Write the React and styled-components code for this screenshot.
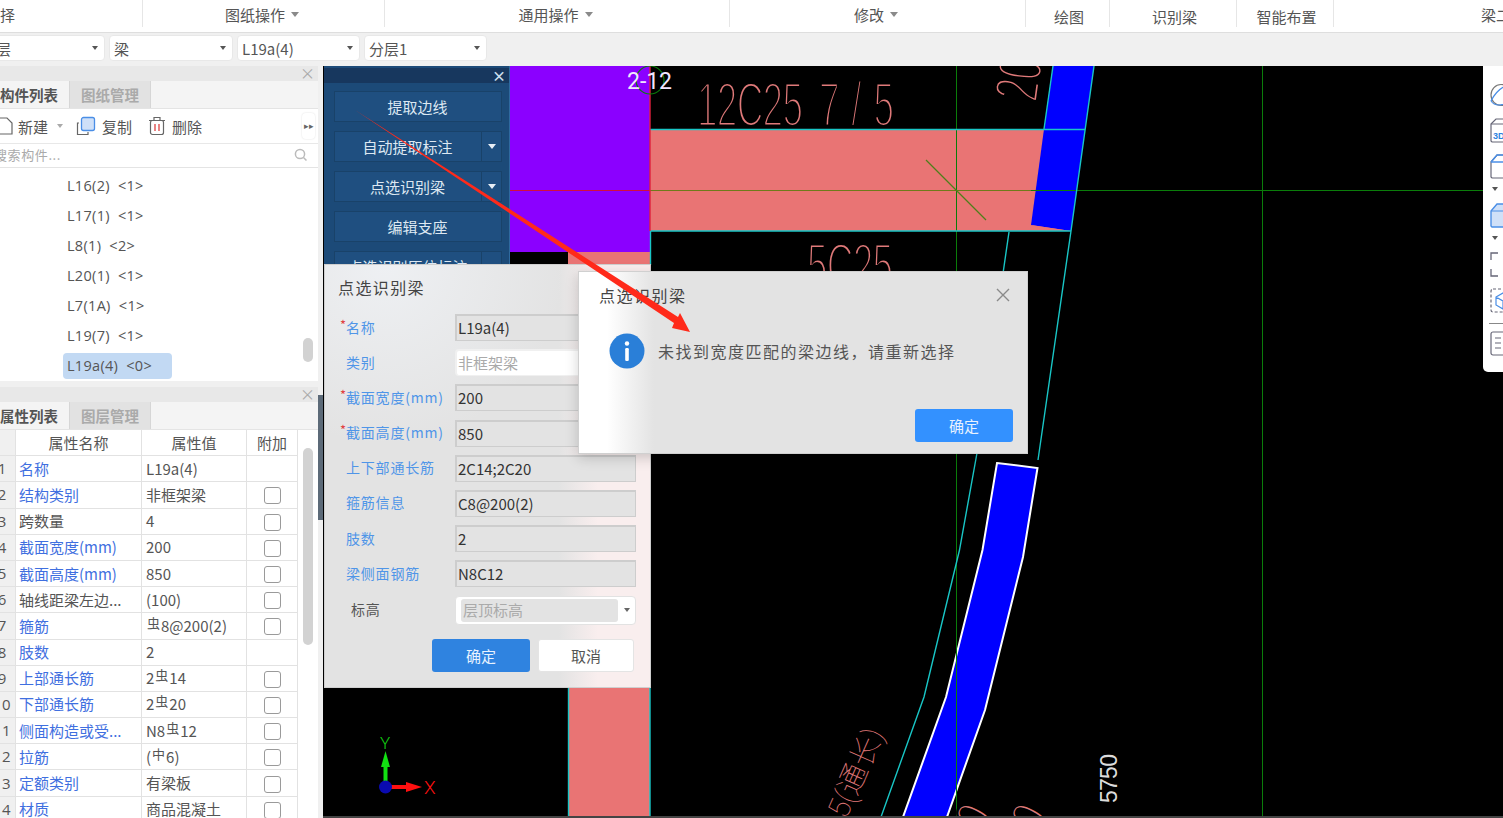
import React from "react";
import styled, { createGlobalStyle } from "styled-components";

const Global = createGlobalStyle`
  html, body { margin: 0; padding: 0; background: #fff; }
  body { font-family: "Noto Sans CJK SC", "Liberation Sans", sans-serif; font-size: 15px; color: #555; }
`;

const Page = styled.div`
  position: relative;
  width: 1503px;
  height: 818px;
  overflow: hidden;
  display: flex;
  flex-direction: column;
`;

/* ribbon */
const Ribbon = styled.div`
  display: flex;
  height: 33px;
  flex: none;
  background: #fff;
  border-bottom: 1px solid #dedede;
  box-sizing: border-box;
`;
const RibbonGroup = styled.div`
  flex: none;
  width: ${p => p.$w}px;
  height: 27px;
  box-sizing: border-box;
  padding-top: ${p => (p.$low ? 6 : 2)}px;
  padding-left: ${p => p.$pad ?? (p.$low ? 3 : 0)}px;
  padding-right: ${p => (p.$low || p.$pad !== undefined ? 0 : 3)}px;
  display: flex;
  align-items: center;
  justify-content: ${p => (p.$pad !== undefined ? "flex-start" : "center")};
  gap: 6px;
  border-right: ${p => (p.$last ? "none" : "1px solid #e6e6e6")};
  color: #555;
  white-space: nowrap;
  overflow: hidden;
`;
const ClippedLabel = styled.span`
  margin-left: -15px;
`;
const Caret = styled.i`
  display: inline-block;
  width: 0;
  height: 0;
  border-left: 4.5px solid transparent;
  border-right: 4.5px solid transparent;
  border-top: 5px solid ${p => p.$c || "#8a8a8a"};
`;

/* selector bar */
const SelectBar = styled.div`
  display: flex;
  flex: none;
  height: 33px;
  align-items: center;
  gap: 4px;
  background: #f0f0f0;
  padding-bottom: 3px;
  box-sizing: border-box;
`;
const Select = styled.div`
  flex: none;
  width: ${p => p.$w}px;
  margin-left: ${p => p.$ml || 0}px;
  height: 26px;
  box-sizing: border-box;
  background: #fff;
  border: 1px solid #e8e8e8;
  border-radius: 4px;
  display: flex;
  align-items: center;
  justify-content: space-between;
  padding: 0 6px 0 4px;
  color: #555;
  & ${Caret} { border-left-width: 3px; border-right-width: 3px; border-top-width: 4px; border-top-color: #555; }
`;

/* main */
const Main = styled.div`
  display: flex;
  flex: 1;
  min-height: 0;
`;
const LeftPanel = styled.div`
  width: 318px;
  flex: none;
  display: flex;
  flex-direction: column;
  gap: 6px;
  background: #f0f0f0;
  overflow: hidden;
`;
const Dock = styled.section`
  flex: none;
  height: ${p => p.$h}px;
  background: #fff;
  display: flex;
  flex-direction: column;
  position: relative;
`;
const DockHead = styled.div`
  height: 15px;
  flex: none;
  background: #e8e8e8;
  color: #aaa;
  font-size: 15px;
  line-height: 13px;
  text-align: right;
  padding-right: 3px;
`;
const Tabs = styled.div`
  display: flex;
  flex: none;
  height: 28px;
  border-bottom: 1px solid #e4e4e4;
  box-sizing: border-box;
  background: #f4f4f4;
`;
const Tab = styled.div`
  flex: none;
  width: ${p => p.$w}px;
  height: 27px;
  box-sizing: border-box;
  font-weight: 700;
  font-size: 14.5px;
  line-height: 27px;
  white-space: nowrap;
  overflow: hidden;
  color: ${p => (p.$on ? "#555" : "#aaa")};
  background: ${p => (p.$on ? "#f4f4f4" : "#e2e2e2")};
  text-align: ${p => (p.$on ? "left" : "center")};
  border-left: ${p => (p.$on ? "none" : "1px solid #d6d6d6")};
  border-right: ${p => (p.$on ? "none" : "1px solid #d6d6d6")};
`;
const Tools = styled.div`
  flex: none;
  height: 35px;
  display: flex;
  align-items: center;
  border-bottom: 1px solid #e8e8e8;
  box-sizing: border-box;
  position: relative;
`;
const NewIcon = styled.svg`
  flex: none;
  width: 13px;
  height: 20px;
`;
const ToolBtn = styled.div`
  display: flex;
  align-items: center;
  flex: none;
  gap: 6px;
  margin-left: ${p => p.$ml}px;
  color: #555;
  & ${Caret} { border-left-width: 3px; border-right-width: 3px; border-top-width: 4px; border-top-color: #aaa; margin-left: 3px; }
`;
const More = styled.div`
  position: absolute;
  right: 3px;
  top: 4px;
  width: 13px;
  height: 26px;
  border-radius: 4px;
  font-size: 9px;
  line-height: 26px;
  text-align: center;
  color: #666;
  background: #fff;
  box-shadow: 0 0 2px #ddd;
`;
const Search = styled.div`
  flex: none;
  height: 24px;
  display: flex;
  align-items: center;
  justify-content: space-between;
  padding: 0 10px 2px 0;
  border-bottom: 1px solid #e4e4e4;
  color: #aaa;
  font-size: 13px;
  letter-spacing: 0.6px;
  overflow: hidden;
  box-sizing: border-box;
`;
const SearchText = styled.span`
  margin-left: -6px;
`;
const List = styled.div`
  padding-top: 3px;
  flex: 1;
`;
const ListRow = styled.div`
  height: 30px;
  display: flex;
  align-items: center;
  padding-left: 63px;
`;
const ListLabel = styled.span`
  display: inline-block;
  box-sizing: border-box;
  width: 109px;
  height: 26px;
  line-height: 26px;
  padding-left: 4px;
  border-radius: 4px;
  white-space: pre;
  color: #555;
  font-size: 14.5px;
  letter-spacing: 0.3px;
  font-family: "Open Sans", "Noto Sans CJK SC", sans-serif;
  background: ${p => (p.$sel ? "#c2d9f3" : "transparent")};
`;
const ScrollThumb = styled.div`
  position: absolute;
  left: 303px;
  top: ${p => p.$t}px;
  width: 10px;
  height: ${p => p.$h}px;
  border-radius: 5px;
  background: #d2d2d2;
`;

/* property table */
const Table = styled.div`
  display: grid;
  width: 298px;
  grid-template-columns: 16px 126px 105px 51px;
  grid-auto-rows: 26.2px;
`;
const Cell = styled.div`
  box-sizing: border-box;
  border-right: 1px solid #e2e2e2;
  border-bottom: 1px solid #e2e2e2;
  display: flex;
  align-items: center;
  padding-left: 3px;
  padding-bottom: 1px;
  white-space: nowrap;
  overflow: hidden;
  color: ${p => (p.$blue ? "#3f6fe0" : "#555")};
`;
const ValueCell = styled(Cell)`
  padding-left: 4px;
`;
const HeadCell = styled(Cell)`
  justify-content: center;
  padding-left: 0;
`;
const NumCell = styled(Cell)`
  padding-left: 0;
  background: #f0f0f0;
`;
const Num = styled.span`
  flex: none;
  width: 32px;
  margin-left: -14px;
  text-align: center;
  font-family: "Open Sans", sans-serif;
`;
const CheckCell = styled(Cell)`
  justify-content: center;
  padding-left: 0;
  padding-bottom: 0;
`;
const Check = styled.span`
  width: 17px;
  height: 17px;
  margin-top: 2px;
  box-sizing: border-box;
  border: 1px solid #9a9a9a;
  border-radius: 3px;
  background: #fff;
`;
const Rebar = styled.span`
  font-size: 13px;
  position: relative;
  top: -3px;
  margin: 0 1px;
`;

const Splitter = styled.div`
  width: 5px;
  flex: none;
  background: #f0f0f0;
`;
const SplitThumb = styled.div`
  margin-top: 329px;
  height: 125px;
  background: #5c6a78;
`;

/* canvas */
const Canvas = styled.div`
  flex: 1;
  position: relative;
  background: #000;
  overflow: hidden;
  border-bottom: 2px solid #444;
  box-sizing: border-box;
`;
const Cad = styled.svg`
  display: block;
  width: 1180px;
  height: 752px;
`;
const BluePanel = styled.div`
  position: absolute;
  left: 1px;
  top: 0;
  width: 186px;
  height: 200px;
  background: #1c4a78;
  border-right: 1px solid #2f6a9e;
  box-sizing: border-box;
  padding: 25px 7px 0 10px;
  display: flex;
  flex-direction: column;
  gap: 9px;
  overflow: hidden;
`;
const BlueHead = styled.div`
  position: absolute;
  left: 0;
  right: 0;
  top: 2px;
  height: 15px;
  background: #17375e;
  color: #cfe0f0;
  font-size: 14px;
  font-weight: 700;
  line-height: 15px;
  text-align: right;
  padding-right: 3px;
`;
const BlueBtn = styled.div`
  flex: none;
  height: 31px;
  display: flex;
  box-sizing: border-box;
  border: 1px solid #194269;
  background: #1f4f80;
  color: #dde8f2;
`;
const BlueLabel = styled.div`
  flex: 1;
  display: flex;
  align-items: center;
  justify-content: center;
  white-space: nowrap;
  padding-right: 1px;
`;
const BlueDrop = styled.div`
  flex: none;
  width: 19px;
  display: flex;
  align-items: center;
  justify-content: center;
  border-left: 1px solid #194269;
`;

const RightBar = styled.div`
  position: absolute;
  right: 0;
  top: 0;
  width: 20px;
  height: 306px;
  background: #fff;
  border-bottom-left-radius: 5px;
  box-sizing: border-box;
  padding: 17px 0 0 7px;
  display: flex;
  flex-direction: column;
  overflow: hidden;
`;
const RightIcon = styled.svg`
  flex: none;
  display: block;
  width: 26px;
  height: 25px;
  margin-top: ${p => p.$mt}px;
`;
const RightCaret = styled(Caret)`
  flex: none;
  margin-top: 8px;
  margin-left: 2px;
  border-top-color: #555;
  border-left-width: 3px;
  border-right-width: 3px;
  border-top-width: 4px;
`;
const RightRule = styled.div`
  flex: none;
  height: 1px;
  margin-top: 10px;
  margin-bottom: -3px;
  margin-left: -1px;
  background: #888;
`;

/* form dialog */
const FormDialog = styled.div`
  position: absolute;
  left: 1px;
  top: 198px;
  width: 327px;
  height: 424px;
  box-sizing: border-box;
  border: 1px solid #cfcfcf;
  background:
    radial-gradient(circle at 60px 0, #eef0f3 0, rgba(238,240,243,0) 180px),
    linear-gradient(90deg, #e3e3e3 0, #e3e3e3 72%, #f9eeee 84%, #f9eeee 100%);
`;
const FormTitle = styled.div`
  font-size: 16px;
  line-height: 22px;
  color: #444;
  letter-spacing: 1.4px;
  padding: 11px 0 0 13px;
  height: 38px;
  box-sizing: border-box;
`;
const FormGrid = styled.div`
  display: flex;
  flex-direction: column;
  gap: 8.2px;
  margin-top: 11px;
`;
const FormRow = styled.div`
  display: flex;
  align-items: center;
  height: ${p => p.$h || 27}px;
`;
const FormLabel = styled.div`
  flex: none;
  width: 130px;
  box-sizing: border-box;
  padding-left: ${p => (p.$plain ? 26 : 21)}px;
  padding-bottom: 2px;
  position: relative;
  white-space: nowrap;
  font-size: 14px;
  letter-spacing: 0.8px;
  color: ${p => (p.$plain ? "#555" : "#4f95e8")};
`;
const Star = styled.span`
  position: absolute;
  left: 15px;
  top: -2px;
  color: #e04040;
  font-size: 13px;
`;
const Field = styled.div`
  flex: none;
  width: 181px;
  height: 27px;
  box-sizing: border-box;
  border-style: solid;
  border-width: 2px 1px 1px 2px;
  background: ${p => (p.$white ? "#fff" : "#e3e3e3")};
  border-radius: ${p => (p.$white ? "4px" : "0")};
  border-color: ${p => (p.$white ? "#f0f0f0" : "#cdcdcd")};
  padding: 0 0 1px 1px;
  display: flex;
  align-items: center;
  color: ${p => (p.$white ? "#aaa" : "#333")};
`;
const LevelSelect = styled.div`
  flex: none;
  width: 181px;
  height: 29px;
  box-sizing: border-box;
  background: #fff;
  border: 1px solid #e2e2e2;
  border-radius: 4px;
  padding: 2px 5px 2px 5px;
  display: flex;
  align-items: center;
  gap: 6px;
  & ${Caret} { border-left-width: 3px; border-right-width: 3px; border-top-width: 4px; border-top-color: #666; }
`;
const LevelValue = styled.div`
  flex: 1;
  height: 100%;
  background: #e3e3e3;
  border-radius: 3px;
  color: #aaa;
  padding-left: 2px;
  line-height: 22px;
`;
const FormActions = styled.div`
  display: flex;
  justify-content: flex-end;
  gap: 8px;
  margin: 14px 16px 0 0;
`;
const PrimaryBtn = styled.div`
  width: ${p => p.$w}px;
  height: 33px;
  border-radius: 3px;
  background: ${p => p.$bg};
  color: #e8f2ff;
  display: flex;
  align-items: center;
  justify-content: center;
`;
const GhostBtn = styled(PrimaryBtn)`
  background: #fff;
  color: #555;
  border: 1px solid #e4e4e4;
  box-sizing: border-box;
`;

/* message dialog */
const MsgDialog = styled.div`
  position: absolute;
  left: 255px;
  top: 205px;
  width: 450px;
  height: 183px;
  box-sizing: border-box;
  border: 1px solid #d0d0d0;
  background: linear-gradient(90deg, #fff 0, #fff 28px, #e3e3e3 75px, #e3e3e3 100%);
  box-shadow: 0 4px 12px rgba(0,0,0,0.18);
  display: flex;
  flex-direction: column;
`;
const MsgHead = styled.div`
  display: flex;
  justify-content: space-between;
  align-items: center;
  height: 46px;
  padding: 0 16px 0 20px;
  font-size: 16px;
  letter-spacing: 1.5px;
  color: #444;
`;
const MsgBody = styled.div`
  display: flex;
  align-items: center;
  gap: 13px;
  padding-left: 30px;
  height: 66px;
  font-size: 16px;
  letter-spacing: 1.5px;
  color: #555;
`;
const MsgFoot = styled.div`
  display: flex;
  justify-content: flex-end;
  padding: 25px 14px 0 0;
`;

const Overlay = styled.svg`
  position: absolute;
  left: 0;
  top: 0;
  width: 1503px;
  height: 818px;
  pointer-events: none;
`;

const listItems = ["L16(2)  <1>", "L17(1)  <1>", "L8(1)  <2>", "L20(1)  <1>", "L7(1A)  <1>", "L19(7)  <1>", "L19a(4)  <0>"];

const props = [
  ["名称", 1, "L19a(4)", 0],
  ["结构类别", 1, "非框架梁", 1],
  ["跨数量", 0, "4", 1],
  ["截面宽度(mm)", 1, "200", 1],
  ["截面高度(mm)", 1, "850", 1],
  ["轴线距梁左边...", 0, "(100)", 1],
  ["箍筋", 1, <><Rebar>虫</Rebar>8@200(2)</>, 1],
  ["肢数", 1, "2", 0],
  ["上部通长筋", 1, <>2<Rebar>虫</Rebar>14</>, 1],
  ["下部通长筋", 1, <>2<Rebar>虫</Rebar>20</>, 1],
  ["侧面构造或受...", 1, <>N8<Rebar>虫</Rebar>12</>, 1],
  ["拉筋", 1, <>(<Rebar>中</Rebar>6)</>, 1],
  ["定额类别", 1, "有梁板", 1],
  ["材质", 1, "商品混凝土", 1],
];

const formRows = [
  ["名称", 1, "L19a(4)"],
  ["类别", 0, "非框架梁", true],
  ["截面宽度(mm)", 1, "200"],
  ["截面高度(mm)", 1, "850"],
  ["上下部通长筋", 0, "2C14;2C20"],
  ["箍筋信息", 0, "C8@200(2)"],
  ["肢数", 0, "2"],
  ["梁侧面钢筋", 0, "N8C12"],
];

const InfoIcon = () => (
  <svg width="36" height="36" viewBox="0 0 36 36">
    <circle cx="18" cy="18" r="17.5" fill="#2a7fd8" />
    <circle cx="18" cy="10.5" r="2.2" fill="#fff" />
    <rect x="16.2" y="15" width="3.6" height="13" rx="1.2" fill="#fff" />
  </svg>
);

const CloseIcon = () => (
  <svg width="16" height="16" viewBox="0 0 16 16">
    <path d="M2 2 L14 14 M14 2 L2 14" stroke="#8a8a8a" strokeWidth="1.4" />
  </svg>
);

const SearchIcon = () => (
  <svg width="14" height="14" viewBox="0 0 14 14" fill="none" stroke="#bbb" strokeWidth="1.5">
    <circle cx="6" cy="6" r="4.6" />
    <path d="M9.5 9.5 L12.5 12.5" />
  </svg>
);

const CadFont = `"Roboto", "Liberation Sans", sans-serif`;
const SAL = "#e07a7a";

/* thin single-line CAD lettering: a real text whose fill is eroded by a black stroke */
const CadText = styled.text`
  font-family: "Liberation Sans", sans-serif;
  fill: ${SAL};
  stroke: #000;
  stroke-width: ${p => p.$sw || 1.9}px;
`;

const CadDrawing = () => (
  <Cad viewBox="323 66 1180 752">
    {/* purple column & salmon fills */}
    <rect x="510" y="66" width="140" height="186" fill="#8b00ff" />
    <rect x="568" y="252" width="82" height="566" fill="#e97474" />
    <rect x="510" y="252" width="58" height="13" fill="#000" />
    <polygon points="650,129 1045,129 1071,231 650,231" fill="#e97474" />
    <polygon points="1053,66 1094,66 1071,231 1031,225 1044,129" fill="#0000ff" />
    <polygon points="1031,225 1071,231 1040,229" fill="#e97474" />
    {/* lower blue member */}
    <polygon
      points="997,463 1037.5,468 1023,557 985,710 947,817 903,817 946,697 982.5,550"
      fill="#0000ff"
      stroke="#fff"
      strokeWidth="2"
    />
    {/* axis lines */}
    <path d="M956.5 66V818 M1262.5 66V818" stroke="#0a7d0a" strokeWidth="1" />
    <path d="M510 190.5H650" stroke="#d0103c" strokeWidth="1" />
    <path d="M650 190.5H1031" stroke="#6f7a1a" strokeWidth="1.2" />
    <path d="M1031 190.5H1483" stroke="#0a7d0a" strokeWidth="1" />
    <path d="M926 160L986 220" stroke="#4f7f1a" strokeWidth="1.2" />
    {/* cyan edges */}
    <path d="M650 129.5H1085 M650 231H1071" stroke="#19c6c6" strokeWidth="1.4" />
    <path d="M1053 66L1044 129" stroke="#19c6c6" strokeWidth="1.4" />
    <path d="M1094 66L1071 231L1038 460" stroke="#19c6c6" strokeWidth="1.4" fill="none" />
    <path d="M1009 232L977 453L959.5 550L924 697L881 817" stroke="#19c6c6" strokeWidth="1.4" fill="none" />
    <path d="M650.5 231V265 M568.5 688V818 M650 688V818" stroke="#19c6c6" strokeWidth="1.4" />
    <path d="M650 66V231" stroke="#e0203c" strokeWidth="1.4" />
    {/* cad annotations */}
    <circle cx="650" cy="80" r="14" fill="none" stroke="#0a7d0a" strokeWidth="1.2" />
    <text x="627" y="89" fontFamily={CadFont} fontSize="23" fill="#f0e6ff" textLength="45">2-12</text>
    <CadText transform="translate(697 126) scale(1 1.7)" fontSize="37" textLength="106">12C25</CadText>
    <CadText transform="translate(819 126) scale(1 1.7)" fontSize="37" textLength="75">7/5</CadText>
    <CadText transform="translate(807 287) scale(1 1.7)" fontSize="37" textLength="86">5C25</CadText>
    <CadText transform="translate(1037 103) rotate(-82) scale(1 1.65)" fontSize="38">20</CadText>
    <text transform="translate(846 820) rotate(-66)" fontFamily={'"Roboto", "Noto Sans CJK SC", sans-serif'} fontWeight="100" fontSize="30" fill={SAL}>5(通长)</text>
    <text transform="translate(1117 803) rotate(-90)" fontFamily={'"Liberation Sans", sans-serif'} fontSize="23" fill="#dcdcdc" textLength="49">5750</text>
    <CadText transform="translate(985 836) rotate(-62) scale(1 1.3)" fontSize="40">0</CadText>
    <CadText transform="translate(1040 836) rotate(-62) scale(1 1.3)" fontSize="40">0</CadText>
    {/* coordinate axes */}
    <path d="M385.5 785V762" stroke="#12e012" strokeWidth="4" />
    <polygon points="385.5,751 381,767 390,767" fill="#12e012" />
    <text x="380" y="749" fontFamily={CadFont} fontSize="17" fontWeight="300" fill="#12c912">Y</text>
    <path d="M385 787H412" stroke="#ff1010" strokeWidth="4" />
    <polygon points="422,787 406,782 406,792" fill="#ff1010" />
    <text x="424" y="794" fontFamily={CadFont} fontSize="19" fontWeight="300" fill="#ff1010">X</text>
    <circle cx="385.5" cy="787" r="6.5" fill="#0a0ab0" />
  </Cad>
);

export default function App() {
  return (
    <Page>
      <Global />
      <Ribbon>
        <RibbonGroup $w={143} $pad={0}><ClippedLabel>选择</ClippedLabel></RibbonGroup>
        <RibbonGroup $w={242}>图纸操作<Caret /></RibbonGroup>
        <RibbonGroup $w={345}>通用操作<Caret /></RibbonGroup>
        <RibbonGroup $w={296}>修改<Caret /></RibbonGroup>
        <RibbonGroup $w={84} $low>绘图</RibbonGroup>
        <RibbonGroup $w={127} $low>识别梁</RibbonGroup>
        <RibbonGroup $w={97} $low>智能布置</RibbonGroup>
        <RibbonGroup $w={169} $pad={147} $last>梁二次编辑</RibbonGroup>
      </Ribbon>
      <SelectBar>
        <Select $w={129} $ml={-24}><span>首层</span><Caret /></Select>
        <Select $w={124}><span>梁</span><Caret /></Select>
        <Select $w={123}><span>L19a(4)</span><Caret /></Select>
        <Select $w={123}><span>分层1</span><Caret /></Select>
      </SelectBar>
      <Main>
        <LeftPanel>
          <Dock $h={315}>
            <DockHead>×</DockHead>
            <Tabs>
              <Tab $on $w={69}>构件列表</Tab>
              <Tab $w={82}>图纸管理</Tab>
            </Tabs>
            <Tools>
              <NewIcon viewBox="0 0 13 20" fill="none" stroke="#666" strokeWidth="1.2">
                <path d="M-4 2H7L12 7V18H-4" />
              </NewIcon>
              <ToolBtn $ml={5}>新建<Caret /></ToolBtn>
              <ToolBtn $ml={13}>
                <svg width="20" height="20" viewBox="0 0 20 20" fill="none">
                  <path d="M3 7H1.5V18.5H12V16" stroke="#666" strokeWidth="1.2" />
                  <rect x="5.5" y="1.5" width="13" height="13" rx="2" fill="#cfe0f8" stroke="#4a8ee6" strokeWidth="1.3" />
                </svg>
                复制
              </ToolBtn>
              <ToolBtn $ml={16}>
                <svg width="18" height="20" viewBox="0 0 18 20" fill="none">
                  <path d="M1 4.5H17 M6 4V1.5H12V4" stroke="#666" strokeWidth="1.2" />
                  <rect x="2.5" y="4.5" width="13" height="14" rx="2" stroke="#666" strokeWidth="1.2" />
                  <path d="M7 8V15 M11 8V15" stroke="#e05050" strokeWidth="1.4" />
                </svg>
                删除
              </ToolBtn>
              <More>▸▸</More>
            </Tools>
            <Search>
              <SearchText>搜索构件...</SearchText>
              <SearchIcon />
            </Search>
            <List>
              {listItems.map((t, i) => (
                <ListRow key={t}><ListLabel $sel={i === 6}>{t}</ListLabel></ListRow>
              ))}
            </List>
            <ScrollThumb $t={272} $h={24} />
          </Dock>
          <Dock $h={431}>
            <DockHead>×</DockHead>
            <Tabs>
              <Tab $on $w={69}>属性列表</Tab>
              <Tab $w={82}>图层管理</Tab>
            </Tabs>
            <Table>
              <NumCell />
              <HeadCell>属性名称</HeadCell>
              <HeadCell>属性值</HeadCell>
              <HeadCell>附加</HeadCell>
              {props.map(([name, blue, val, chk], i) => (
                <React.Fragment key={name}>
                  <NumCell><Num>{i + 1}</Num></NumCell>
                  <Cell $blue={!!blue}>{name}</Cell>
                  <ValueCell>{val}</ValueCell>
                  <CheckCell>{chk ? <Check /> : null}</CheckCell>
                </React.Fragment>
              ))}
            </Table>
            <ScrollThumb $t={61} $h={197} />
          </Dock>
        </LeftPanel>
        <Splitter><SplitThumb /></Splitter>
        <Canvas>
          <CadDrawing />
          <BluePanel>
            <BlueHead>×</BlueHead>
            <BlueBtn><BlueLabel>提取边线</BlueLabel></BlueBtn>
            <BlueBtn><BlueLabel>自动提取标注</BlueLabel><BlueDrop><Caret $c="#e8eef5" /></BlueDrop></BlueBtn>
            <BlueBtn><BlueLabel>点选识别梁</BlueLabel><BlueDrop><Caret $c="#e8eef5" /></BlueDrop></BlueBtn>
            <BlueBtn><BlueLabel>编辑支座</BlueLabel></BlueBtn>
            <BlueBtn><BlueLabel>点选识别原位标注</BlueLabel><BlueDrop><Caret $c="#e8eef5" /></BlueDrop></BlueBtn>
          </BluePanel>
          <RightBar>
            <RightIcon $mt={0} viewBox="0 0 26 25" fill="none">
              <ellipse cx="11" cy="12" rx="10" ry="10.5" stroke="#777" strokeWidth="1.2" />
              <path d="M1 18C4 12 9 5 18 2" stroke="#4a8ee6" strokeWidth="1.4" />
              <path d="M1 18C5 24 12 22 18 20" stroke="#4a8ee6" strokeWidth="1.2" />
            </RightIcon>
            <RightIcon $mt={10} viewBox="0 0 26 25" fill="none">
              <path d="M1 6L6 1H22V24H2L1 23Z" stroke="#667" strokeWidth="1.2" />
              <path d="M1 6H22" stroke="#667" strokeWidth="1" />
              <text x="3" y="21" fontSize="9" fontWeight="700" fontFamily='"Liberation Sans", sans-serif' fill="#2f83e0">3D</text>
            </RightIcon>
            <RightIcon $mt={11} viewBox="0 0 26 25" fill="none">
              <path d="M1 8L7 1H24V24H2L1 23Z" stroke="#667" strokeWidth="1.2" />
              <path d="M1 8H24" stroke="#4a8ee6" strokeWidth="1.4" />
              <path d="M1 8L7 1H24" stroke="#4a8ee6" strokeWidth="1.4" />
            </RightIcon>
            <RightCaret />
            <RightIcon $mt={12} viewBox="0 0 26 25" fill="none">
              <path d="M1 8L7 1H24V24H2L1 23Z" fill="#cfe0f8" stroke="#4a8ee6" strokeWidth="1.4" />
              <path d="M1 8H24" stroke="#4a8ee6" strokeWidth="1.2" />
            </RightIcon>
            <RightCaret />
            <RightIcon $mt={12} viewBox="0 0 26 25" fill="none">
              <path d="M8 1H1V8 M1 17V24H8" stroke="#667" strokeWidth="1.3" />
            </RightIcon>
            <RightIcon $mt={11} viewBox="0 0 26 25" fill="none">
              <rect x="1" y="1" width="24" height="23" rx="2" stroke="#667" strokeWidth="1.2" strokeDasharray="3 2" />
              <path d="M6 9L13 5L20 9V17L13 21L6 17Z M6 9L13 13L20 9 M13 13V21" stroke="#4a8ee6" strokeWidth="1.2" />
            </RightIcon>
            <RightRule />
            <RightIcon $mt={10} viewBox="0 0 26 25" fill="none">
              <rect x="1" y="1" width="24" height="23" rx="2" stroke="#667" strokeWidth="1.2" />
              <path d="M5 7H11 M5 12H11 M5 17H11 M13 7H22 M13 12H22 M13 17H22" stroke="#667" strokeWidth="1.1" />
            </RightIcon>
          </RightBar>
          <FormDialog>
            <FormTitle>点选识别梁</FormTitle>
            <FormGrid>
              {formRows.map(([label, req, val, white]) => (
                <FormRow key={label}>
                  <FormLabel>{req ? <Star>*</Star> : null}{label}</FormLabel>
                  <Field $white={white}>{val}</Field>
                </FormRow>
              ))}
              <FormRow $h={29}>
                <FormLabel $plain>标高</FormLabel>
                <LevelSelect><LevelValue>层顶标高</LevelValue><Caret /></LevelSelect>
              </FormRow>
            </FormGrid>
            <FormActions>
              <PrimaryBtn $w={98} $bg="#2f83e0">确定</PrimaryBtn>
              <GhostBtn $w={96}>取消</GhostBtn>
            </FormActions>
          </FormDialog>
          <MsgDialog>
            <MsgHead>点选识别梁<CloseIcon /></MsgHead>
            <MsgBody><InfoIcon />未找到宽度匹配的梁边线，请重新选择</MsgBody>
            <MsgFoot><PrimaryBtn $w={98} $bg="#3391ff">确定</PrimaryBtn></MsgFoot>
          </MsgDialog>
        </Canvas>
      </Main>
      <Overlay viewBox="0 0 1503 818">
        <polygon points="355,110 678,317 680,313 690,332 672,328 674,323" fill="#ff2a1a" />
      </Overlay>
    </Page>
  );
}
